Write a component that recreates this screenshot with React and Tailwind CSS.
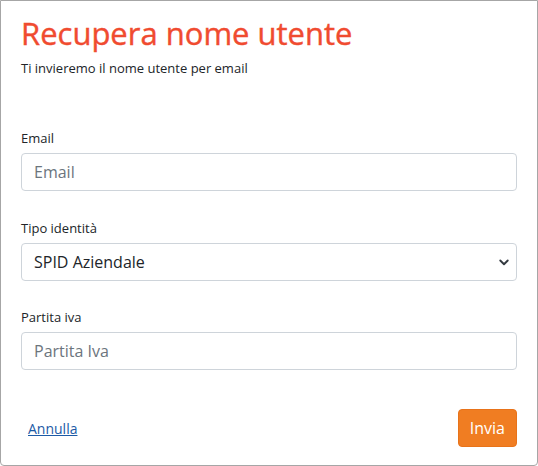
export default function App() {
  const font = { fontFamily: '"Segoe UI", "Open Sans", "Noto Sans", sans-serif' };
  return (
    <div className="w-[538px] h-[466px] bg-white border border-[#a6a6a6] rounded-b-[4px] px-[20px] pt-[12px] pb-[18px] flex flex-col" style={font}>
      <h1 className="text-[31px] leading-[40px] text-[#f04b30] font-medium [-webkit-text-stroke:0.4px_#f04b30]">Recupera nome utente</h1>
      <p className="text-[13px] leading-[18px] text-[#212529] mt-[6px]">Ti invieremo il nome utente per email</p>

      <div className="mt-[52px] flex flex-col">
        <label className="text-[13px] leading-[18px] text-[#212529]">Email</label>
        <input
          placeholder="Email"
          className="mt-[6px] h-[38px] w-full border border-[#ced4da] rounded-[4px] px-[12px] text-[16px] text-[#212529] placeholder:text-[#6c757d] outline-none"
        />
      </div>

      <div className="mt-[28px] flex flex-col">
        <label className="text-[13px] leading-[18px] text-[#212529]">Tipo identità</label>
        <div className="mt-[6px] h-[38px] w-full border border-[#ced4da] rounded-[4px] pl-[12px] pr-[6px] flex items-center justify-between">
          <span className="text-[16px] text-[#212529]">SPID Aziendale</span>
          <svg width="12" height="12" viewBox="0 0 16 16">
            <path d="M3 6l5 5 5-5" fill="none" stroke="#343a40" strokeWidth="2.5" strokeLinecap="round" strokeLinejoin="round" />
          </svg>
        </div>
      </div>

      <div className="mt-[27px] flex flex-col">
        <label className="text-[13px] leading-[18px] text-[#212529]">Partita iva</label>
        <input
          placeholder="Partita Iva"
          className="mt-[6px] h-[38px] w-full border border-[#ced4da] rounded-[4px] px-[12px] text-[16px] text-[#212529] placeholder:text-[#6c757d] outline-none"
        />
      </div>

      <div className="mt-auto flex items-center justify-between">
        <a href="#" className="ml-[7px] text-[14px] text-[#1c5aa6] underline">Annulla</a>
        <button className="h-[38px] px-[11px] bg-[#f07d22] text-white text-[16px] rounded-[4px] border border-[#e8731a]">Invia</button>
      </div>
    </div>
  );
}
